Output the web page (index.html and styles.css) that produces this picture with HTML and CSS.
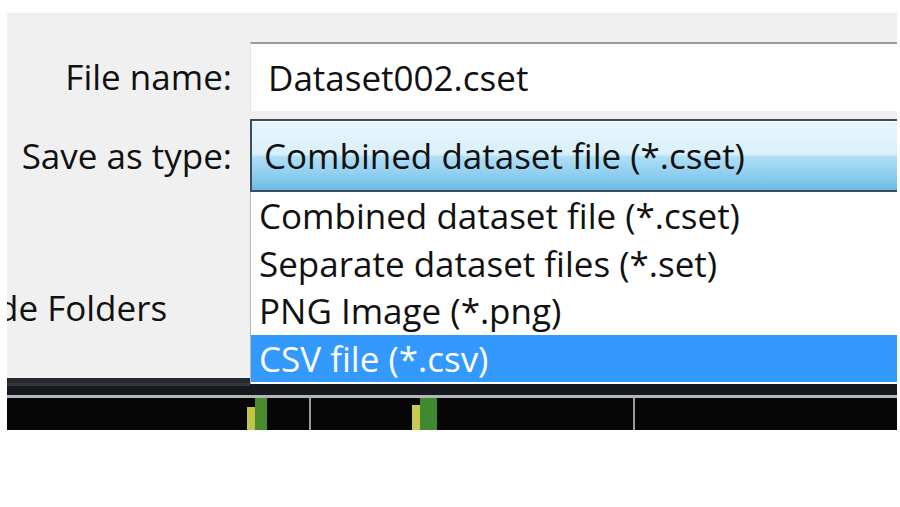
FILE: index.html
```html
<!DOCTYPE html>
<html lang="en">
<head>
<meta charset="utf-8">
<title>Save As</title>
<link rel="stylesheet" href="styles.css">
</head>
<body>
<div class="screen">
  <div class="dialog">
    <label class="label">File name:</label>
    <div class="textbox">Dataset002.cset</div>
    <label class="label">Save as type:</label>
    <div class="combo">Combined dataset file (*.cset)</div>
    <div class="hide-folders">de Folders</div>
  </div>
  <ul class="dropdown">
    <li class="option">Combined dataset file (*.cset)</li>
    <li class="option">Separate dataset files (*.set)</li>
    <li class="option">PNG Image (*.png)</li>
    <li class="option selected">CSV file (*.csv)</li>
  </ul>
  <div class="strip">
    <svg class="strip-svg" width="890" height="47" viewBox="0 0 890 47" xmlns="http://www.w3.org/2000/svg">
      <rect x="0" y="0" width="890" height="12" fill="#15191d"/>
      <rect x="0" y="0" width="243" height="3" fill="#33383e"/>
      <rect x="0" y="12" width="890" height="3" fill="#b3b6b9"/>
      <rect x="0" y="15" width="890" height="32" fill="#060607"/>
      <rect x="240" y="24" width="8" height="23" fill="#c2c44a"/>
      <rect x="248" y="15" width="12" height="32" fill="#4a8a2c"/>
      <rect x="405" y="22" width="8" height="25" fill="#c8c852"/>
      <rect x="413" y="15" width="17" height="32" fill="#3f8a2e"/>
      <rect x="302" y="15" width="2" height="32" fill="#9a9a9a"/>
      <rect x="626" y="15" width="2" height="32" fill="#9a9a9a"/>
    </svg>
  </div>
</div>
</body>
</html>
```
FILE: styles.css
```css
html, body {
  margin: 0;
  padding: 0;
  background: #ffffff;
}

body {
  font-family: "Open Sans", "Noto Sans", sans-serif;
  font-size: 35px;
  color: #111111;
}

.screen {
  position: relative;
  width: 890px;
  margin: 13px 0 0 7px;
}

.dialog {
  box-sizing: border-box;
  height: 370px;
  background: #f0f0f0;
  border-bottom: 5px solid #26292e;
  overflow: hidden;
  display: grid;
  grid-template-columns: 225px 647px;
  grid-template-rows: 69px 73px auto;
  column-gap: 18px;
  row-gap: 8px;
  padding-top: 29px;
  align-items: center;
}

.label {
  text-align: right;
  white-space: nowrap;
}

.textbox {
  box-sizing: border-box;
  height: 69px;
  background: #ffffff;
  border-top: 2px solid #9c9c9c;
  border-left: 1px solid #e2e2e2;
  padding-left: 17px;
  display: flex;
  align-items: center;
  white-space: nowrap;
}

.combo {
  box-sizing: border-box;
  height: 73px;
  border: 2px solid #3b4d5f;
  border-right: 0;
  background: linear-gradient(to bottom, #eaf6fd 0%, #d9f0fb 48%, #b0def5 52%, #84c9ee 85%, #6db9e4 100%);
  box-shadow: inset 0 1px 0 #ffffff;
  padding-left: 12px;
  display: flex;
  align-items: center;
  white-space: nowrap;
}

.hide-folders {
  grid-column: 1;
  margin-top: 84px;
  text-indent: -10px;
  white-space: nowrap;
  align-self: start;
}

.dropdown {
  position: absolute;
  top: 179px;
  left: 243px;
  width: 647px;
  box-sizing: border-box;
  margin: 0;
  padding: 0 0 2px 0;
  list-style: none;
  background: #ffffff;
  border-left: 1px solid #b4b4b4;
}

.option {
  height: 47.5px;
  padding-left: 8px;
  display: flex;
  align-items: center;
  white-space: nowrap;
}

.option.selected {
  background: #3399fd;
  color: #ffffff;
}

.strip {
  height: 47px;
}

.strip-svg {
  display: block;
}
```
